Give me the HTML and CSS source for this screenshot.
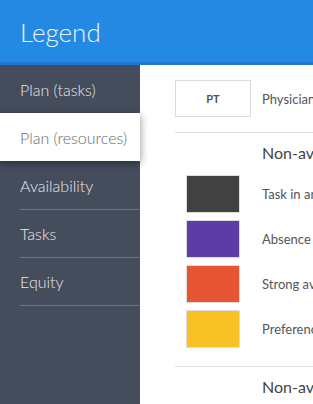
FILE: index.html
```html
<!DOCTYPE html>
<html>
<head>
<meta charset="utf-8">
<link rel="stylesheet" href="styles.css">
</head>
<body>
<header class="topbar"><h1 class="title">Legend</h1></header>
<div class="layout">
  <nav class="sidebar">
    <div class="nav-item">Plan (tasks)</div>
    <div class="nav-item active">Plan (resources)</div>
    <div class="nav-item">Availability</div>
    <div class="nav-item">Tasks</div>
    <div class="nav-item">Equity</div>
  </nav>
  <main class="content">
    <div class="row team-row">
      <div class="cell"><div class="tag">PT</div></div>
      <div class="label">Physician team</div>
    </div>
    <div class="divider"></div>
    <div class="section-title">Non-availabilities</div>
    <div class="swatches">
      <div class="row">
        <div class="cell"><div class="swatch dark"></div></div>
        <div class="label">Task in another plan</div>
      </div>
      <div class="row">
        <div class="cell"><div class="swatch purple"></div></div>
        <div class="label">Absence</div>
      </div>
      <div class="row">
        <div class="cell"><div class="swatch orange"></div></div>
        <div class="label">Strong availability</div>
      </div>
      <div class="row">
        <div class="cell"><div class="swatch yellow"></div></div>
        <div class="label">Preference</div>
      </div>
    </div>
    <div class="divider"></div>
    <div class="section-title">Non-availabilities (other)</div>
  </main>
</div>
</body>
</html>
```
FILE: styles.css
```css
html, body {
  margin: 0;
  padding: 0;
  width: 313px;
  height: 404px;
  overflow: hidden;
  font-family: Lato, "Open Sans", sans-serif;
  background: #ffffff;
}
.topbar {
  height: 65px;
  box-sizing: border-box;
  background: #2489e2;
  border-bottom: 3px solid #1f78cb;
  display: flex;
  align-items: center;
  padding-left: 20px;
  position: relative;
  z-index: 2;
}
.title {
  margin: 0;
  font-weight: 300;
  font-size: 26px;
  color: #eef5fd;
  padding-top: 2px;
}
.layout {
  display: flex;
  height: 339px;
}
.sidebar {
  width: 140px;
  flex: none;
  background: #454d5d;
  display: flex;
  flex-direction: column;
}
.nav-item {
  height: 48px;
  box-sizing: border-box;
  display: flex;
  align-items: center;
  padding-left: 20px;
  font-size: 16px;
  font-weight: 300;
  color: #e6e8ec;
  white-space: nowrap;
  position: relative;
}
.nav-item::after {
  content: "";
  position: absolute;
  left: 20px;
  right: 0;
  bottom: -1px;
  height: 1px;
  background: #6c7382;
}
.nav-item.active {
  background: #ffffff;
  color: #6a6a6a;
  box-shadow: 0 2px 8px rgba(0,0,0,0.45);
  z-index: 1;
}
.nav-item.active::after { display: none; }
.content {
  flex: 1;
  overflow: hidden;
  padding: 15px 0 0 35px;
  white-space: nowrap;
}
.row {
  display: flex;
  align-items: center;
}
.cell {
  width: 87px;
  flex: none;
}
.tag {
  width: 76px;
  height: 37px;
  box-sizing: border-box;
  border: 1px solid #dcdcdc;
  display: flex;
  align-items: center;
  justify-content: center;
  font-size: 11px;
  font-weight: 700;
  color: #555555;
}
.label {
  font-size: 13px;
  color: #555555;
}
.divider {
  height: 1px;
  background: #e0e0e0;
  margin-top: 15px;
}
.section-title {
  font-size: 16px;
  line-height: 20px;
  color: #444444;
  padding: 10px 0 0 87px;
}
.swatches {
  display: flex;
  flex-direction: column;
  gap: 7px;
  padding-top: 12px;
  padding-bottom: 3px;
}
.swatch {
  margin-left: 11px;
  width: 54px;
  height: 38px;
  box-sizing: border-box;
  border: 1px solid #dddddd;
}
.dark { background: #424242; }
.purple { background: #5c3ca7; }
.orange { background: #e75632; }
.yellow { background: #f8c227; }
```
